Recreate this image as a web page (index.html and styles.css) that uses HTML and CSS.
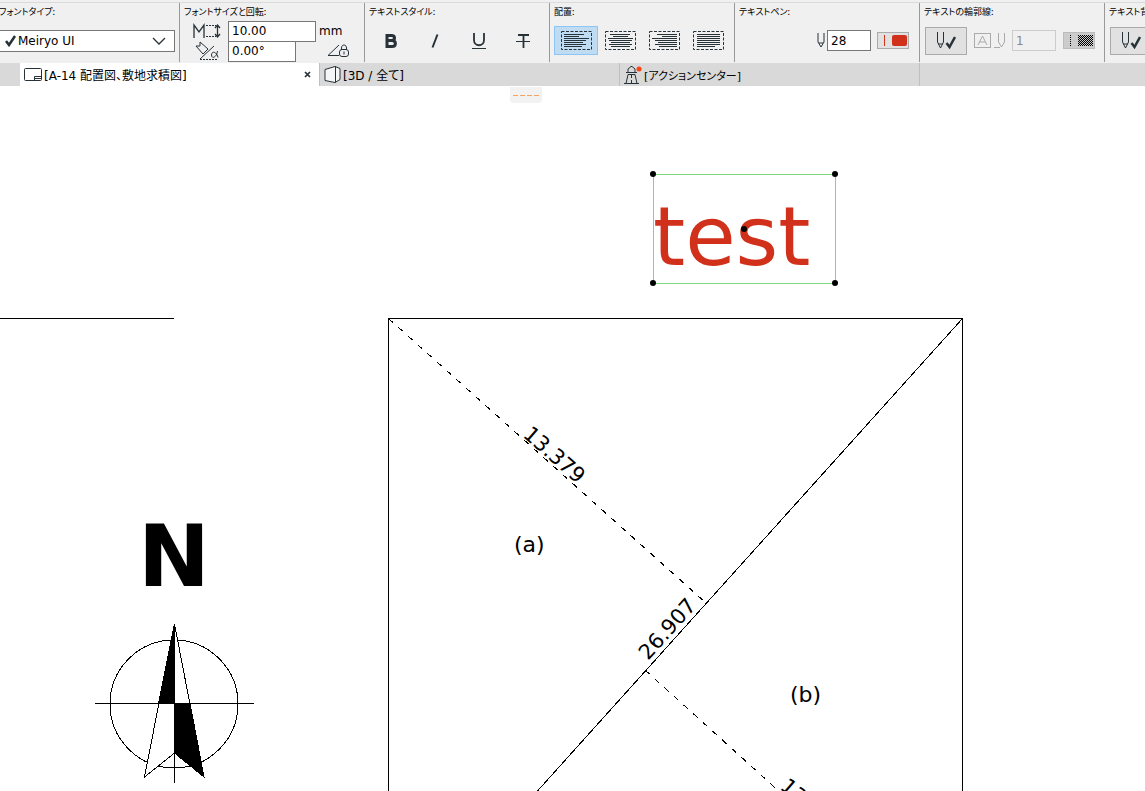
FILE: index.html
```html
<!DOCTYPE html>
<html lang="ja">

<head>
    <meta charset="UTF-8">
    <title>A-14 配置図、敷地求積図</title>
    <link rel="stylesheet" href="styles.css">
</head>

<body>

    <!-- shared icons -->
    <svg class="defs" width="0" height="0" aria-hidden="true">
        <defs>
            <symbol id="pen" viewBox="0 0 8 16">
                <path d="M1 0v9l3 5 3-5V0M2 10h4" />
            </symbol>
            <symbol id="pen-check" viewBox="0 0 20 18">
                <path d="M1.500 0v10l3 6 3-6V0M2 12h5" />
                <path class="heavy" d="M10.500 11l3 4 5.500-10" />
            </symbol>
            <symbol id="frame" viewBox="0 0 31 19">
                <rect x=".5" y=".5" width="30" height="18" stroke-dasharray="3 1.500" />
            </symbol>
        </defs>
    </svg>

    <div class="toolbar">
        <div class="group">
            <label class="title" for="font-type">フォントタイプ:</label>
            <div class="row font-row">
                <select id="font-type">
                    <option>Meiryo UI</option>
                </select>
                <svg class="icon font-check" width="12" height="12"><path class="heavy" d="M1 6l3 4 6-9" /></svg>
                <svg class="icon font-arrow" width="14" height="8"><path d="M1 1l6 6 6-6" stroke-width="1.300" /></svg>
            </div>
        </div>

        <div class="group">
            <span class="title">フォントサイズと回転:</span>
            <div class="size-grid">
                <svg class="icon" width="28" height="16">
                    <path d="M1 15V2l5 7 5-7v13M24.500 3v10M22 5l2.500-3L27 5M22 11l2.500 3 2.500-3" stroke-width="1.300" />
                    <path d="M13 2.500h10M13 13.500h10" stroke-dasharray="2 1" />
                </svg>
                <input class="size" type="text" value="10.00" aria-label="フォントサイズ">
                <span>mm</span>
                <svg class="icon" width="28" height="20">
                    <path d="M7 1v4H3l7 8 5-5zM7 18L21 5" />
                    <path d="M24.500 10c-1 7-6 8-6 4s5-4 6.500 2.500" />
                    <path d="M7 18.500h18" stroke-dasharray="2 1" />
                </svg>
                <input class="angle" type="text" value="0.00°" aria-label="回転">
                <svg class="icon lock" width="22" height="14">
                    <path d="M12 1L1 11.500h11M14.500 6V4c0-4 5-4 5 0v2" />
                    <rect x="12.500" y="5.500" width="9" height="7" rx="2.500" />
                    <path d="M17 7.500v3" />
                </svg>
            </div>
        </div>

        <div class="group">
            <span class="title">テキストスタイル:</span>
            <div class="row">
                <button class="tool" aria-label="太字">
                    <svg class="icon" width="14" height="16"><path d="M3 2.500h4.500c4 0 4 5 0 5H3zM3 7.500h5c4.500 0 4.500 6 0 6H3z" stroke-width="3" /></svg>
                </button>
                <button class="tool" aria-label="斜体">
                    <svg class="icon" width="14" height="16"><path d="M9.500 1.500l-5 13" stroke-width="2" /></svg>
                </button>
                <button class="tool" aria-label="下線">
                    <svg class="icon" width="14" height="18"><path d="M2 1v7c0 7 10 7 10 0V1" stroke-width="1.800" /><path d="M0 16.500h14" /></svg>
                </button>
                <button class="tool" aria-label="取り消し線">
                    <svg class="icon" width="14" height="16"><path d="M2 2h11M7.500 2v13" stroke-width="1.800" /><path d="M0 8.500h14" /></svg>
                </button>
            </div>
        </div>

        <div class="group">
            <span class="title">配置:</span>
            <div class="row">
                <button class="tool active" aria-label="左揃え">
                    <svg class="icon" width="31" height="19"><use href="#frame" /><path class="lines" d="M3 3.500h20M3 5.500h15M3 7.500h25M3 9.500h22M3 11.500h19M3 13.500h22M3 15.500h18" /></svg>
                </button>
                <button class="tool" aria-label="中央揃え">
                    <svg class="icon" width="31" height="19"><use href="#frame" /><path class="lines" d="M5 3.500h20M8 5.500h15M3 7.500h25M4 9.500h23M6 11.500h19M4 13.500h23M6 15.500h19" /></svg>
                </button>
                <button class="tool" aria-label="右揃え">
                    <svg class="icon" width="31" height="19"><use href="#frame" /><path class="lines" d="M8 3.500h20M13 5.500h15M3 7.500h25M6 9.500h22M9 11.500h19M6 13.500h22M10 15.500h18" /></svg>
                </button>
                <button class="tool" aria-label="両端揃え">
                    <svg class="icon" width="31" height="19"><use href="#frame" /><path class="lines" d="M4 3.500h23M4 5.500h23M4 7.500h23M4 9.500h23M4 11.500h23M4 13.500h23M4 15.500h18" /></svg>
                </button>
            </div>
        </div>

        <div class="group">
            <label class="title" for="text-pen">テキストペン:</label>
            <div class="row pen-row">
                <svg class="icon" width="8" height="16"><use href="#pen" /></svg>
                <input id="text-pen" class="pen-number" type="text" value="28">
                <button class="swatch" aria-label="ペンの色">
                    <svg width="28" height="13"><path d="M5.500 1v11" stroke="#d1301a" /><rect x="13" y="1" width="15" height="11" rx="2" fill="#d1301a" /></svg>
                </button>
            </div>
        </div>

        <div class="group">
            <label class="title" for="outline-pen">テキストの輪郭線:</label>
            <div class="row outline-row">
                <button class="toggle" aria-label="輪郭線"><svg class="icon" width="20" height="18"><use href="#pen-check" /></svg></button>
                <svg class="icon muted" width="31" height="16">
                    <rect x=".5" y=".5" width="16" height="14" />
                    <path d="M4 12l4.500-9 4.500 9M5.500 9h6M20 14.500h6M24.500 0v9l3 5 3-5V0" />
                </svg>
                <input id="outline-pen" class="pen-number" type="text" value="1" disabled>
                <button class="swatch off" aria-label="輪郭線の色" disabled>
                    <svg width="28" height="13">
                        <defs>
                            <pattern id="checker" width="2" height="2" patternUnits="userSpaceOnUse"><path d="M0 0h1v1H0zM1 1h1v1H1z" /></pattern>
                        </defs>
                        <path d="M5.500 1v11" stroke="#000" stroke-dasharray="1 1" />
                        <rect x="13" y="1" width="15" height="11" fill="url(#checker)" />
                    </svg>
                </button>
            </div>
        </div>

        <div class="group">
            <span class="title">テキスト背景:</span>
            <div class="row outline-row">
                <button class="toggle" aria-label="背景"><svg class="icon" width="20" height="18"><use href="#pen-check" /></svg></button>
            </div>
        </div>
    </div>

    <div class="tabs">
        <div class="tab current">
            <svg class="icon" width="18" height="14"><rect x=".5" y=".5" width="17" height="12" rx="1" fill="#fff" /><path d="M10.500 12.500v-4h7M11 10.500h6" /></svg>
            <a href="#">[A-14 配置図、敷地求積図]</a>
            <button class="close" aria-label="閉じる"><svg class="icon" width="7" height="7"><path d="M1 1l5 5M6 1L1 6" stroke-width="1.700" /></svg></button>
        </div>
        <div class="tab">
            <svg class="icon" width="17" height="17"><path d="M1 3.500l10-3 5 2v11l-5 3-10-2zM11.500 .500v16" fill="#f6f6f6" /></svg>
            <a href="#">[3D / 全て]</a>
        </div>
        <div class="tab small">
            <svg class="icon" width="18" height="18">
                <path d="M4 6V3l3-2.500h1L11 3v3M2 6.500h11M4 8.500h7M4 8.500l-2 9M11 8.500l2 9M0 17.500h15" />
                <path d="M7.500 9v8" stroke-dasharray="3 2" />
                <circle cx="15" cy="3" r="2.500" fill="#ff4411" stroke="none" />
            </svg>
            <a href="#">[アクションセンター]</a>
        </div>
        <div class="tab"></div>
    </div>

    <div class="canvas">
        <svg class="drawing" width="100%" height="100%">
            <!-- site boundary -->
            <g class="line">
                <path d="M0 232.500h174" />
                <path d="M388.500 900V232.500h574V900" />
                <path d="M962.500 232.500L537 705.500l-90 100" />
                <path d="M388.500 232.500L706 517" stroke-dasharray="6 7" />
                <path d="M645 584L845 765" stroke-dasharray="6 7" />
            </g>

            <g class="dimension">
                <text transform="translate(522 350) rotate(41)">13.379</text>
                <text transform="translate(648 575) rotate(-48)">26.907</text>
                <text transform="translate(779 702) rotate(41)">13.379</text>
            </g>
            <g class="area">
                <text x="514" y="466">(a)</text>
                <text x="790" y="616">(b)</text>
            </g>

            <!-- north arrow -->
            <text class="north" x="138" y="500">N</text>
            <g class="line">
                <circle cx="174" cy="618" r="64" />
                <path d="M174.500 538L204 691l-29.500-24L144.500 691z" fill="#fff" />
                <path d="M174.500 538v79.500H158.500zM174.500 617.500H190L204 691l-29.500-24z" fill="#000" />
                <path d="M95 617.500h159M174.500 538v159" />
            </g>

            <!-- selected text box -->
            <text class="sample" x="653" y="179">test</text>
            <rect class="selection" x="653.500" y="88.500" width="182" height="109" />
            <g>
                <circle cx="653" cy="88" r="3" />
                <circle cx="835" cy="88" r="3" />
                <circle cx="653" cy="197" r="3" />
                <circle cx="835" cy="197" r="3" />
                <circle cx="744" cy="143" r="3" />
            </g>
        </svg>
        <button class="handle" aria-label="パレット"><svg width="26" height="1"><path d="M0 .500h26" stroke="#f4a460" stroke-width="1" stroke-dasharray="5 2" /></svg></button>
    </div>

</body>

</html>
```
FILE: styles.css
```css
* {
    box-sizing: border-box;
}

body {
    margin: 0;
    height: 100vh;
    display: flex;
    flex-direction: column;
    overflow: hidden;
    background: #fff;
    color: #000;
    font-family: "DejaVu Sans", "Noto Sans CJK JP", sans-serif;
    font-size: 12px;
}

button,
input,
select {
    margin: 0;
    padding: 0;
    border-radius: 0;
    color: inherit;
    font: inherit;
}

button {
    display: flex;
    align-items: center;
    justify-content: center;
    border: 1px solid transparent;
    background: none;
}

.defs {
    position: absolute;
}

.icon {
    flex: none;
    fill: none;
    stroke: #263238;
}

.heavy {
    stroke-width: 2.5px;
}

.lines {
    stroke-width: 1px;
}

.muted {
    stroke: #aaa;
}

/* toolbar */
.toolbar {
    display: flex;
    flex: none;
    height: 63px;
    padding-top: 3px;
    margin-left: -5px;
    overflow: hidden;
    background: linear-gradient(#f0f0f0 2px, #dadada 2px, #dadada 3px, #f0f0f0 3px);
}

.group {
    flex: 0 0 185px;
    height: 59px;
    padding: 0 4px;
    border-right: 1px solid #999;
    overflow: hidden;
}

.title {
    display: block;
    height: 17px;
    font-family: "Noto Sans CJK JP", sans-serif;
    font-size: 9px;
    font-feature-settings: "palt";
    line-height: 17px;
    white-space: nowrap;
}

.row {
    display: flex;
    align-items: center;
    height: 29px;
    margin-top: 6px;
}

.font-row {
    position: relative;
}

#font-type {
    width: 100%;
    height: 22px;
    padding-left: 18px;
    border: 1px solid #777;
    background: #fff;
    appearance: none;
}

.font-check,
.font-arrow {
    position: absolute;
    pointer-events: none;
}

.font-check {
    left: 6px;
}

.font-arrow {
    right: 9px;
}

.size-grid {
    display: grid;
    grid-template-columns: 32px 88px 1fr;
    grid-auto-rows: 20px;
    column-gap: 3px;
    align-items: center;
    padding: 1px 0 0 9px;
    line-height: 20px;
}

input {
    height: 21px;
    padding: 0 3px;
    border: 1px solid #777;
    background: #fff;
}

.size {
    width: 88px;
}

.angle {
    width: 68px;
}

.lock {
    margin-left: 8px;
}

.tool {
    width: 44px;
    height: 29px;
}

.tool.active {
    border-color: #8ec5f2;
    background: #c0dcf3;
}

.pen-row {
    justify-content: flex-end;
    gap: 2px;
    padding-right: 6px;
}

.pen-number {
    width: 44px;
}

.pen-number:disabled {
    border-color: #ccc;
    background: #f0f0f0;
    color: #888;
}

.swatch {
    width: 32px;
    height: 17px;
    margin-left: 4px;
    border-color: #aaa;
    background: #e1e1e1;
}

.swatch svg {
    flex: none;
}

.swatch.off {
    border-color: #bbb;
    background: #ccc;
}

.outline-row {
    gap: 7px;
    padding-left: 1px;
}

.outline-row .swatch {
    margin-left: 0;
}

.toggle {
    width: 42px;
    height: 28px;
    border-color: #aaa;
    background: #e1e1e1;
}

/* view tabs */
.tabs {
    display: flex;
    flex: none;
    height: 23px;
    padding-left: 20px;
    overflow: hidden;
    background: #d9d9d9;
}

.tab {
    display: flex;
    flex: 0 0 300px;
    align-items: center;
    gap: 2px;
    padding: 0 7px 0 4px;
    border-right: 1px solid #c0c0c0;
}

.tab a {
    flex: 1;
    color: inherit;
    font-feature-settings: "palt";
    text-decoration: none;
    white-space: nowrap;
}

.tab.current {
    background: #fff;
}

.tab.small {
    font-size: 11px;
}

.close {
    width: 9px;
    height: 9px;
}

/* drawing area */
.canvas {
    position: relative;
    flex: 1;
    min-height: 0;
    overflow: hidden;
}

.drawing {
    display: block;
}

.line {
    fill: none;
    stroke: #000;
    shape-rendering: crispEdges;
}

.dimension {
    font-size: 21px;
}

.area {
    font-size: 22px;
}

.north {
    font-size: 86px;
    font-weight: bold;
}

.sample {
    fill: #d1301a;
    font-size: 82px;
}

.selection {
    fill: none;
    stroke: #7dd87d;
}

.handle {
    position: absolute;
    top: 1px;
    left: 510px;
    width: 32px;
    height: 16px;
    border-radius: 0 0 4px 4px;
    background: #f2f2f2;
}
```
